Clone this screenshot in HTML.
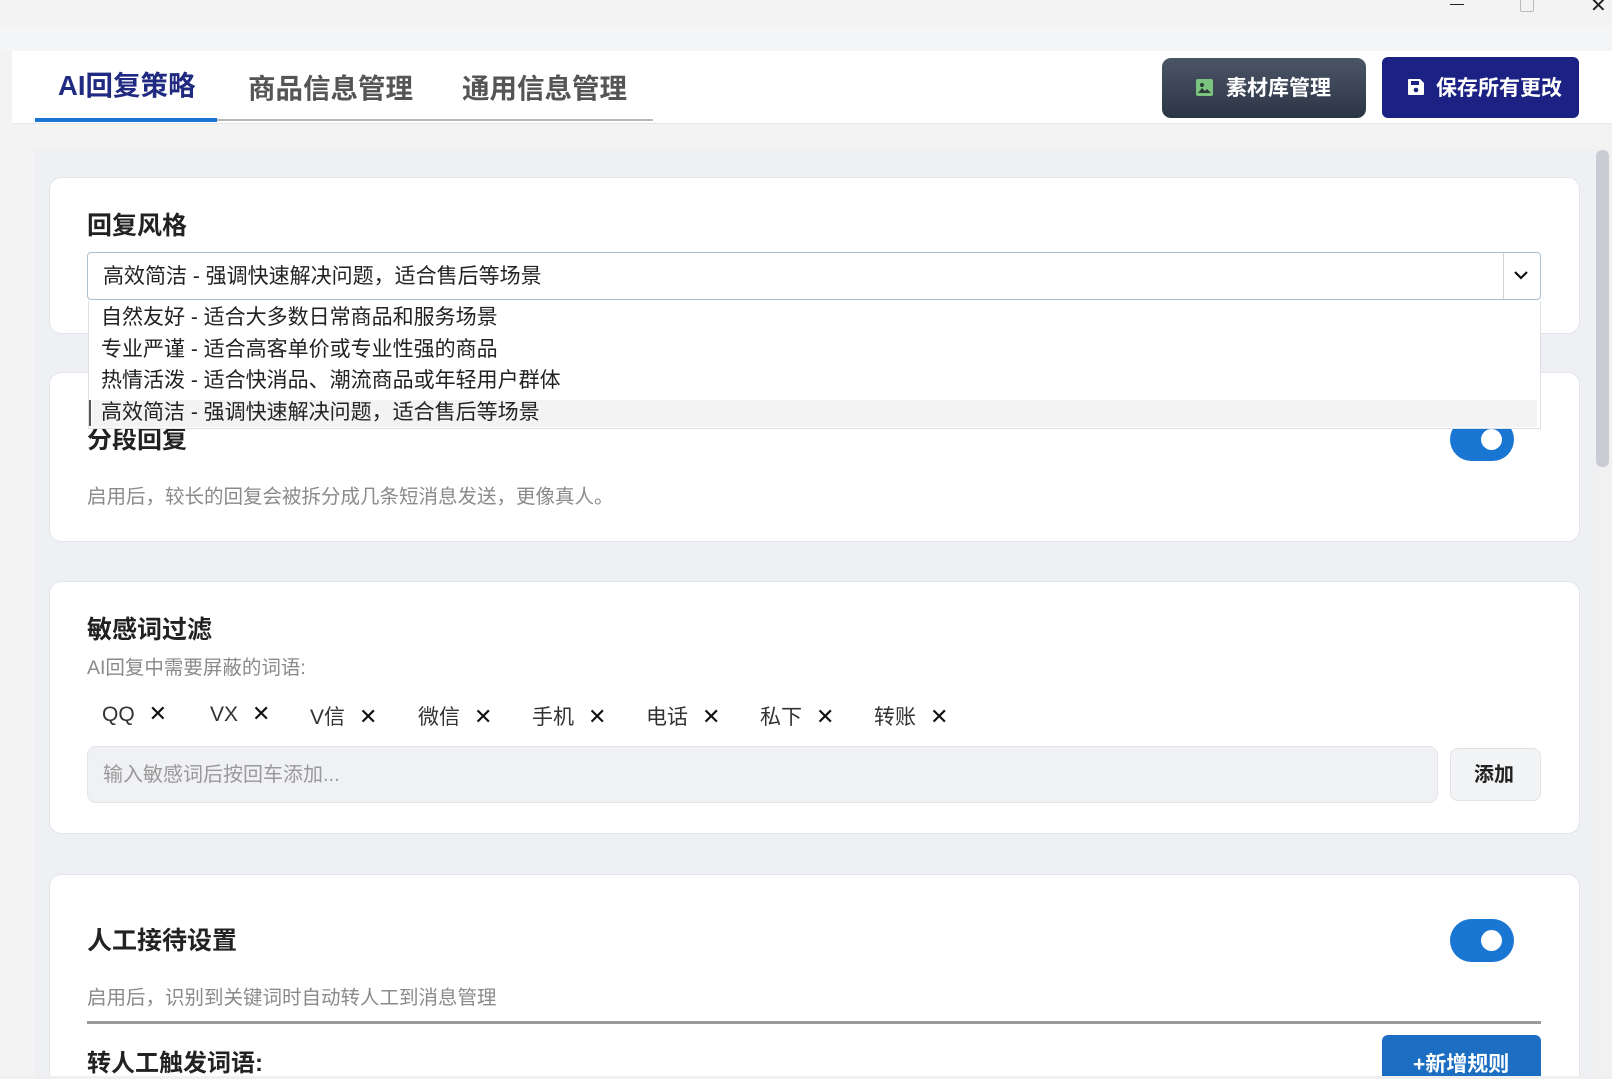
<!DOCTYPE html>
<html style="overflow:hidden;height:1079px"><head><meta charset="utf-8"><style>
*{box-sizing:border-box;margin:0;padding:0}
body{width:1612px;height:1079px;overflow:hidden;background:#f3f3f4;font-family:"Liberation Sans","Noto Sans CJK SC",sans-serif;position:relative;color:#222}
.a{position:absolute}
.t{white-space:nowrap;line-height:1}
.card{position:absolute;background:#fff;border:1px solid #e2e5ea;border-radius:12px;left:49px;width:1531px}
.h{font-size:25px;font-weight:bold;color:#222}
.d{font-size:19.5px;color:#8a8a8a}
.tog{position:absolute;width:64px;height:43px;border-radius:22px;background:#1976d2}
.tog:after{content:"";position:absolute;right:12px;top:11px;width:21px;height:21px;border-radius:50%;background:#fff}
.tag{position:absolute;top:701px;font-size:21px;color:#333;white-space:nowrap}
.tag b{font-weight:normal;margin-left:14px;font-size:22px;color:#111}
</style></head><body>
<div class="a" style="left:0;top:27px;width:1612px;height:24px;background:#f4f5f7"></div>
<div class="a t" style="left:1450px;top:4px;width:14px;height:1px;background:#222"></div>
<div class="a" style="left:1520px;top:-2px;width:14px;height:14px;border:1px solid #bbb;border-radius:2px"></div>
<div class="a t" style="left:1590px;top:-4px;font-size:20px;color:#222">✕</div>
<!-- header -->
<div class="a" style="left:12px;top:51px;width:1600px;height:73px;background:#fff;border-bottom:1px solid #e4e6ea"></div>
<div class="a t" style="left:58px;top:72px;font-size:27.5px;font-weight:bold;color:#1f2a80">AI回复策略</div>
<div class="a t" style="left:248px;top:75px;font-size:27.5px;font-weight:bold;color:#555">商品信息管理</div>
<div class="a t" style="left:462px;top:75px;font-size:27.5px;font-weight:bold;color:#555">通用信息管理</div>
<div class="a" style="left:35px;top:119px;width:618px;height:2px;background:#b8b8b8"></div>
<div class="a" style="left:35px;top:118px;width:182px;height:4px;background:#1976d2"></div>
<div class="a" style="left:1162px;top:58px;width:204px;height:60px;border-radius:9px;background:linear-gradient(#4b5566,#2c3546)"></div>
<svg class="a" style="left:1196px;top:79px" width="17" height="17" viewBox="0 0 17 17"><rect width="17" height="17" rx="2" fill="#7bc47f"/><circle cx="6" cy="6" r="2" fill="#2d3b3a"/><path d="M2 14l4-5 3 3 2-2 4 4z" fill="#2d3b3a"/></svg>
<div class="a t" style="left:1226px;top:78px;font-size:21px;font-weight:bold;color:#fff">素材库管理</div>
<div class="a" style="left:1382px;top:57px;width:197px;height:61px;border-radius:6px;background:#1b2283"></div>
<svg class="a" style="left:1407px;top:78px" width="18" height="18" viewBox="0 0 18 18"><path d="M2 1h11l4 4v11a1 1 0 0 1-1 1H2a1 1 0 0 1-1-1V2a1 1 0 0 1 1-1z" fill="#fff"/><rect x="4" y="3" width="8" height="4" fill="#1b2283"/><circle cx="9" cy="12" r="2.3" fill="#1b2283"/></svg>
<div class="a t" style="left:1436px;top:78px;font-size:21px;font-weight:bold;color:#fff">保存所有更改</div>
<!-- content -->
<div class="a" style="left:35px;top:149px;width:1560px;height:930px;background:#eef0f3"></div>
<div class="a" style="left:1595px;top:149px;width:17px;height:930px;background:#f1f1f1"></div>
<div class="a" style="left:1596px;top:150px;width:13px;height:317px;border-radius:6px;background:#c9ccd2"></div>

<div class="card" style="top:177px;height:157px"></div>
<div class="a t h" style="left:87px;top:214px">回复风格</div>
<div class="a" style="left:87px;top:252px;width:1454px;height:48px;border:1px solid #a9bfd6;border-radius:4px;background:#fff"></div>
<div class="a" style="left:1503px;top:253px;width:1px;height:46px;background:#d0d4da"></div>
<svg class="a" style="left:1512px;top:269px" width="18" height="12" viewBox="0 0 18 12"><path d="M3 3l6 6 6-6" stroke="#111" stroke-width="2.2" fill="none"/></svg>
<div class="a t" style="left:103px;top:266px;font-size:21px;color:#222">高效简洁 - 强调快速解决问题，适合售后等场景</div>

<div class="card" style="top:372px;height:170px"></div>
<div class="a t h" style="left:87px;top:428px">分段回复</div>
<div class="tog" style="left:1450px;top:418px"></div>
<div class="a t d" style="left:87px;top:488px">启用后，较长的回复会被拆分成几条短消息发送，更像真人。</div>

<!-- dropdown -->
<div class="a" style="left:88px;top:301px;width:1453px;height:128px;background:#fff;border:1px solid #dcdfe4;border-top:none"></div>
<div class="a" style="left:92px;top:400px;width:1445px;height:27px;background:#f3f3f3"></div>
<div class="a" style="left:89px;top:400px;width:2px;height:26px;background:#555"></div>
<div class="a t" style="left:101px;top:307px;font-size:21px;color:#222">自然友好 - 适合大多数日常商品和服务场景</div>
<div class="a t" style="left:101px;top:339px;font-size:21px;color:#222">专业严谨 - 适合高客单价或专业性强的商品</div>
<div class="a t" style="left:101px;top:370px;font-size:21px;color:#222">热情活泼 - 适合快消品、潮流商品或年轻用户群体</div>
<div class="a t" style="left:101px;top:402px;font-size:21px;color:#222">高效简洁 - 强调快速解决问题，适合售后等场景</div>

<div class="card" style="top:581px;height:253px"></div>
<div class="a t h" style="left:87px;top:618px">敏感词过滤</div>
<div class="a t d" style="left:87px;top:659px">AI回复中需要屏蔽的词语:</div>
<div class="tag" style="left:102px">QQ<b>✕</b></div>
<div class="tag" style="left:210px">VX<b>✕</b></div>
<div class="tag" style="left:310px">V信<b>✕</b></div>
<div class="tag" style="left:418px">微信<b>✕</b></div>
<div class="tag" style="left:532px">手机<b>✕</b></div>
<div class="tag" style="left:646px">电话<b>✕</b></div>
<div class="tag" style="left:760px">私下<b>✕</b></div>
<div class="tag" style="left:874px">转账<b>✕</b></div>
<div class="a" style="left:87px;top:746px;width:1351px;height:57px;background:#f0f1f4;border:1px solid #e2e4e8;border-radius:9px"></div>
<div class="a t" style="left:103px;top:765px;font-size:20px;color:#999">输入敏感词后按回车添加...</div>
<div class="a" style="left:1450px;top:748px;width:91px;height:53px;background:#f3f4f6;border:1px solid #e0e2e6;border-radius:8px"></div>
<div class="a t" style="left:1474px;top:765px;font-size:20px;font-weight:bold;color:#222">添加</div>

<div class="card" style="top:874px;height:205px;border-bottom:none;border-radius:12px 12px 0 0"></div>
<div class="a t h" style="left:87px;top:929px">人工接待设置</div>
<div class="tog" style="left:1450px;top:919px"></div>
<div class="a t d" style="left:87px;top:989px">启用后，识别到关键词时自动转人工到消息管理</div>
<div class="a" style="left:87px;top:1021px;width:1454px;height:3px;background:#9a9a9a"></div>
<div class="a t h" style="left:87px;top:1052px;font-size:24px">转人工触发词语:</div>
<div class="a" style="left:1382px;top:1035px;width:159px;height:44px;border-radius:6px 6px 0 0;background:#1b6ec2"></div>
<div class="a t" style="left:1413px;top:1054px;font-size:21px;font-weight:bold;color:#fff">+新增规则</div>
<div class="a" style="left:0;top:1076px;width:1612px;height:3px;background:#f0f0f0"></div>
</body></html>
